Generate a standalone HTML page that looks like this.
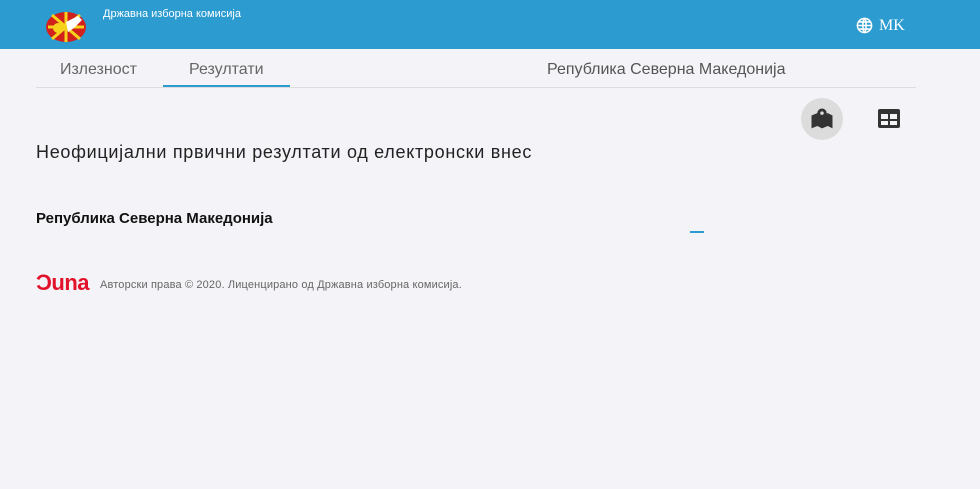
<!DOCTYPE html>
<html><head><meta charset="utf-8"><style>
*{margin:0;padding:0;box-sizing:border-box}
body{width:980px;height:489px;overflow:hidden;background:#f4f3f7;font-family:"Liberation Sans",sans-serif;position:relative}
.hdr{position:absolute;left:0;top:0;width:980px;height:49px;background:#2b9bd0}
.abs{position:absolute;white-space:nowrap}
</style></head><body>
<div class="hdr"></div>
<svg class="abs" style="left:44px;top:8px" width="48" height="36" viewBox="0 0 48 36">
<ellipse cx="22" cy="19" rx="20" ry="15" fill="#d2201c"/>
<g stroke="#f6d21a" stroke-width="3"><line x1="4" y1="19" x2="40" y2="19"/><line x1="22" y1="4" x2="22" y2="34"/><line x1="8" y1="7" x2="36" y2="31"/><line x1="8" y1="31" x2="36" y2="7"/></g>
<circle cx="14" cy="20" r="5" fill="#f6d21a"/>
<path d="M22 14 L34 8 L38 12 L30 20 L24 24 Z" fill="#fff"/>
</svg>
<div class="abs" style="left:103px;top:8px;font-size:11px;color:#fff">Државна изборна комисија</div>
<svg class="abs" style="left:856px;top:17px" width="17" height="17" viewBox="0 0 24 24" fill="none" stroke="#fff" stroke-width="2.2"><circle cx="12" cy="12" r="10" fill="none"/><path d="M2 12h20M12 2c3 3 3 17 0 20M12 2c-3 3-3 17 0 20M4 7h16M4 17h16"/></svg>
<div class="abs" style="left:879px;top:17px;font-size:16px;color:#fff;font-family:'Liberation Serif',serif">MK</div>
<div class="abs" style="left:60px;top:61px;font-size:16px;color:#666">Излезност</div>
<div class="abs" style="left:189px;top:61px;font-size:16px;color:#666">Резултати</div>
<div class="abs" style="left:547px;top:61px;font-size:16px;color:#555">Република Северна Македонија</div>
<div class="abs" style="left:36px;top:87px;width:880px;height:1px;background:#ddd"></div>
<div class="abs" style="left:163px;top:85px;width:127px;height:2px;background:#2b9bd0"></div>
<div class="abs" style="left:801px;top:98px;width:42px;height:42px;border-radius:50%;background:#dcdcdc"></div>
<svg class="abs" style="left:808px;top:105px" width="28" height="28" viewBox="0 0 24 24"><path d="M3 9l5-2 4 2v11l-4-2-5 2zM12 9l5-2 4 2v11l-4-2-5 2z" fill="#333"/><circle cx="12" cy="7" r="4" fill="#333"/><circle cx="12" cy="7" r="1.5" fill="#dcdcdc"/></svg>
<svg class="abs" style="left:877px;top:108px" width="24" height="21" viewBox="0 0 24 21"><rect x="1" y="1" width="22" height="19" rx="2" fill="#333"/><rect x="4" y="6" width="7" height="5" fill="#f4f3f7"/><rect x="13" y="6" width="7" height="5" fill="#f4f3f7"/><rect x="4" y="13" width="7" height="4" fill="#f4f3f7"/><rect x="13" y="13" width="7" height="4" fill="#f4f3f7"/></svg>
<div class="abs" style="left:36px;top:142px;font-size:18px;letter-spacing:0.7px;color:#222">Неофицијални првични резултати од електронски внес</div>
<div class="abs" style="left:36px;top:210px;font-size:15px;font-weight:bold;color:#111">Република Северна Македонија</div>
<div class="abs" style="left:690px;top:231px;width:14px;height:2px;background:#2b9bd0"></div>
<div class="abs" style="left:36px;top:270px;font-size:22px;font-weight:bold;color:#e3122b;letter-spacing:-0.5px">Ɔuna</div>
<div class="abs" style="left:100px;top:279px;font-size:11px;letter-spacing:0.15px;color:#666">Авторски права © 2020. Лиценцирано од Државна изборна комисија.</div>
</body></html>
